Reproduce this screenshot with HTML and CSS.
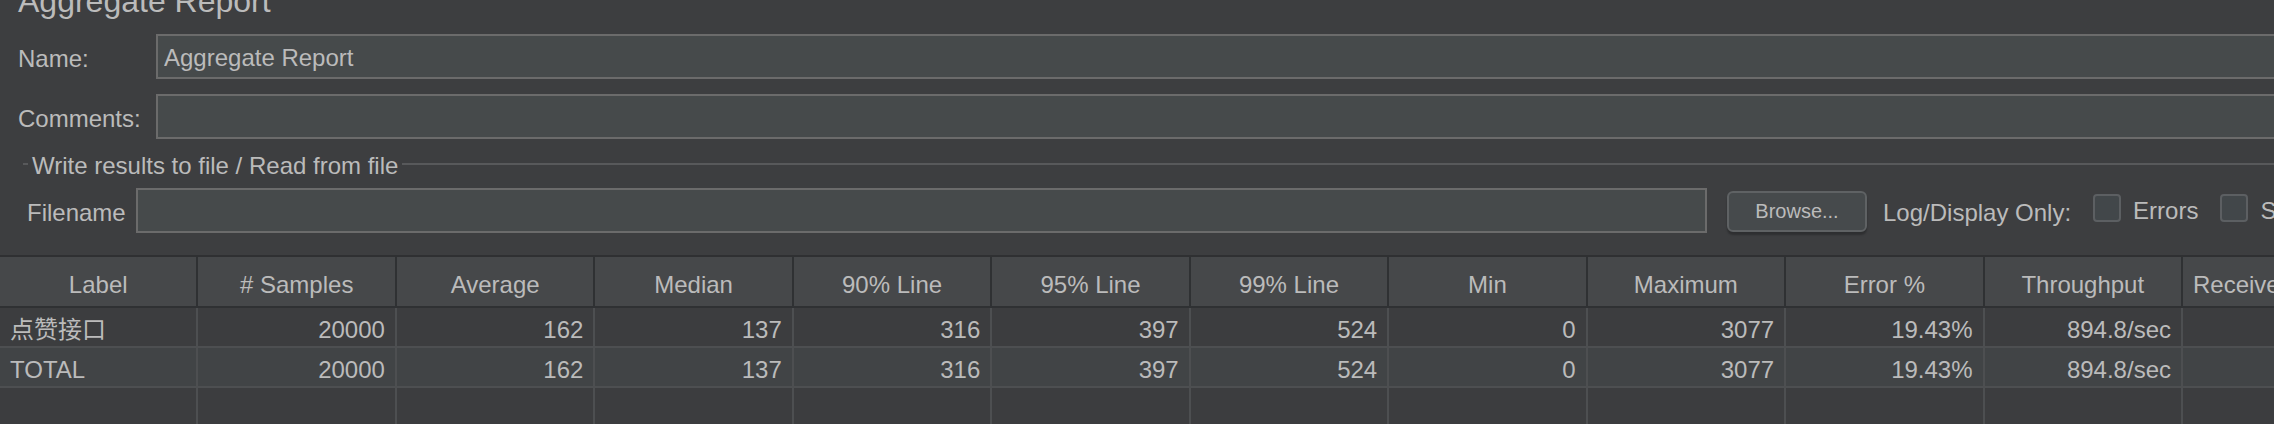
FILE: index.html
```html
<!DOCTYPE html>
<html lang="zh-CN">
<head>
  <meta charset="UTF-8">
  <meta name="viewport" content="width=device-width, initial-scale=1.0">
  <title>Aggregate Report</title>
  <link rel="stylesheet" href="styles.css">
</head>
<body>
  <div class="page">
    <h1 class="title">Aggregate Report</h1>

    <!-- nome e comentarios do listener -->
    <div class="meta">
      <label for="name" class="field-label">Name:</label>
      <input type="text" id="name" class="text-field" value="Aggregate Report">
      <label for="comments" class="field-label">Comments:</label>
      <input type="text" id="comments" class="text-field">
    </div>

    <fieldset class="file-box">
      <legend>Write results to file / Read from file</legend>
      <div class="file-row">
        <label for="filename" class="field-label file-label">Filename</label>
        <input type="text" id="filename" class="text-field file-field">
        <button type="button" class="browse">Browse...</button>
        <span class="field-label log-label">Log/Display Only:</span>
        <label class="check"><input type="checkbox"> Errors</label>
        <label class="check"><input type="checkbox"> Successes</label>
      </div>
    </fieldset>

    <!-- tabela de resultados -->
    <div class="report">
      <div class="row head">
        <div class="cell">Label</div>
        <div class="cell"># Samples</div>
        <div class="cell">Average</div>
        <div class="cell">Median</div>
        <div class="cell">90% Line</div>
        <div class="cell">95% Line</div>
        <div class="cell">99% Line</div>
        <div class="cell">Min</div>
        <div class="cell">Maximum</div>
        <div class="cell">Error %</div>
        <div class="cell">Throughput</div>
        <div class="cell">Received KB/sec</div>
        <div class="cell">Sent KB/sec</div>
      </div>
      <div class="row">
        <div class="cell name">点赞接口</div>
        <div class="cell">20000</div>
        <div class="cell">162</div>
        <div class="cell">137</div>
        <div class="cell">316</div>
        <div class="cell">397</div>
        <div class="cell">524</div>
        <div class="cell">0</div>
        <div class="cell">3077</div>
        <div class="cell">19.43%</div>
        <div class="cell">894.8/sec</div>
        <div class="cell">263.41</div>
        <div class="cell">187.52</div>
      </div>
      <div class="row alt">
        <div class="cell name">TOTAL</div>
        <div class="cell">20000</div>
        <div class="cell">162</div>
        <div class="cell">137</div>
        <div class="cell">316</div>
        <div class="cell">397</div>
        <div class="cell">524</div>
        <div class="cell">0</div>
        <div class="cell">3077</div>
        <div class="cell">19.43%</div>
        <div class="cell">894.8/sec</div>
        <div class="cell">263.41</div>
        <div class="cell">187.52</div>
      </div>
      <div class="row">
        <div class="cell"></div><div class="cell"></div><div class="cell"></div>
        <div class="cell"></div><div class="cell"></div><div class="cell"></div>
        <div class="cell"></div><div class="cell"></div><div class="cell"></div>
        <div class="cell"></div><div class="cell"></div><div class="cell"></div>
        <div class="cell"></div>
      </div>
    </div>
  </div>
</body>
</html>
```

FILE: styles.css
```css
/* painel escuro no estilo Darcula */
html, body {
  margin: 0;
  background-color: #3d3e40;
  overflow: hidden;
}
body {
  font-family: "Liberation Sans", "Noto Sans CJK SC", sans-serif;
  font-size: 24px;
  color: #bbbbbb;
}
.page {
  width: 2600px;
  display: flow-root;
}
.title {
  margin: -15px 0 0 18px;
  font-size: 32px;
  font-weight: normal;
  line-height: 32px;
}
.meta {
  display: grid;
  grid-template-columns: 138px 1fr;
  row-gap: 15px;
  align-items: center;
  margin: 17px 0 0 18px;
}
.field-label {
  line-height: 27px;
  padding-top: 3px;
  white-space: nowrap;
}
.text-field {
  box-sizing: border-box;
  height: 45px;
  margin: 0;
  padding: 3px 6px 0;
  border: 2px solid #6b6b6b;
  background-color: #464a4b;
  color: #bbbbbb;
  font: inherit;
  outline: none;
}
.file-box {
  margin: 9px 0 0 23px;
  padding: 9px 0 22px 0;
  border: none;
  border-top: 2px solid #58595b;
  min-width: 0;
}
.file-box legend {
  margin-left: 5px;
  padding: 4px 4px 0;
  line-height: 27px;
}
.file-row {
  display: flex;
  align-items: center;
  padding-left: 4px;
}
.file-label {
  width: 109px;
}
.file-field {
  width: 1571px;
}
.browse {
  box-sizing: border-box;
  width: 140px;
  height: 41px;
  margin: 2px 0 0 20px;
  border: 2px solid #5f6264;
  border-radius: 6px;
  background-color: #464a4c;
  box-shadow: 0 3px 2px rgba(0,0,0,0.25);
  color: #bbbbbb;
  font-family: inherit;
  font-size: 20px;
}
.log-label {
  margin-left: 16px;
}
.check {
  display: flex;
  align-items: center;
  gap: 12px;
  margin-left: 22px;
  line-height: 27px;
  white-space: nowrap;
}
.check input {
  appearance: none;
  box-sizing: border-box;
  width: 28px;
  height: 28px;
  margin: 0 0 5px;
  border: 2px solid #5c5f62;
  border-radius: 4px;
  background-color: #42474a;
}
.report {
  border-top: 2px solid #2f3032;
}
.row {
  display: grid;
  grid-template-columns: repeat(13, 198.46px);
  background-color: #3c3d3f;
}
.row.alt {
  background-color: #414446;
}
.cell {
  box-sizing: border-box;
  height: 40px;
  padding: 6px 10px 0;
  border-right: 2px solid #4d4f51;
  border-bottom: 2px solid #4d4f51;
  line-height: 32px;
  text-align: right;
  white-space: nowrap;
  overflow: hidden;
}
.cell.name {
  text-align: left;
}
.head {
  background-color: #46484a;
}
.head .cell {
  height: 51px;
  line-height: 43px;
  text-align: center;
  border-color: #2f3133;
}
```
